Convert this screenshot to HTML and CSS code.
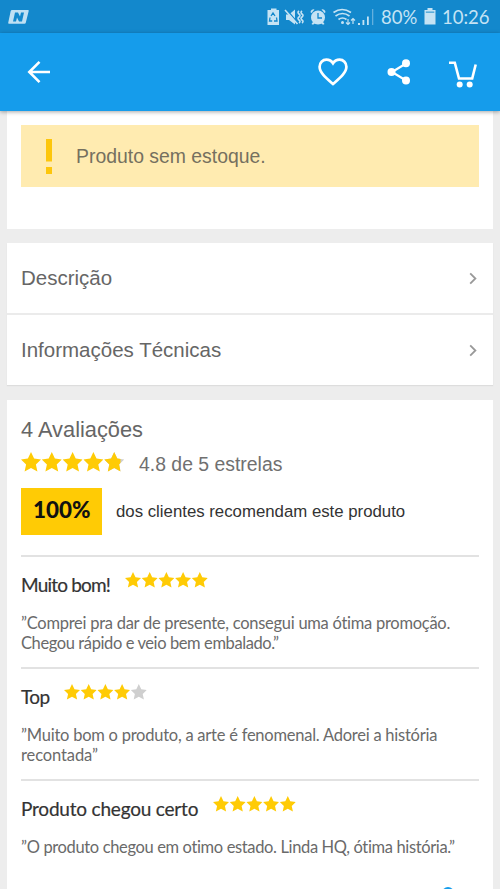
FILE: index.html
```html
<!DOCTYPE html>
<html lang="pt-BR">
<head>
<meta charset="utf-8">
<meta name="viewport" content="width=device-width">
<title>Produto</title>
<link rel="stylesheet" href="styles.css">
</head>
<body>
<svg class="defs" aria-hidden="true">
  <symbol id="star" viewBox="0 0 20 20"><path d="M10 0l3.100 6.600 6.900.8-5.100 5 1.500 7.100L10 15.900l-6.400 3.600 1.500-7.100L0 7.400l6.900-.8z"/></symbol>
</svg>
<div class="screen">
  <div class="status">
    <svg class="status-app" width="21" height="14" viewBox="0 0 21 14"><path d="M4 0h16q1 0 .7 1l-3 12q-.2.8-1.2.8H1q-1 0-.8-1L2.7 1Q3 0 4 0z" fill="#bfe0f3"/><path d="M5 11.500L7 2.500h3l2 4 1-4h3l-2 9h-3l-2-4-1 4z" fill="#1388cc"/></svg>
    <svg class="status-icons" width="112" height="20" viewBox="0 0 112 20">
      <g fill="#c5e3f4">
        <path d="M4 1.500h5.500V3H12v15H.5V3H4z"/>
        <path d="M19 7.500h3l6-5v15L22 13h-3z"/>
        <circle cx="51" cy="10.500" r="7"/>
        <path d="M43.500 5a3 3 0 0 1 4-2.500l-3.300 3.800zM58.500 5a3 3 0 0 0-4-2.500l3.300 3.800zM46 15l-1.500 2 1.500.8 2-1.500zM56 15l1.500 2-1.500.8-2-1.500z"/>
        <path d="M91 18v-2h2v2zM95.500 18v-5h1.800v5zM100 18V9.500h1.800V18z"/>
        <path d="M105 18V2h1.300v16z" opacity=".45"/>
      </g>
      <g fill="none" stroke="#1388cc" stroke-width="1.300">
        <path d="M4 9l2-3 2 3M9.500 10.500l.5 3.500H7M5.200 14H2.500L3 10.500"/>
        <path d="M19.500 2.500l11 13" stroke-width="1.300"/>
        <path d="M51 6v5h4"/>
      </g>
      <g fill="none" stroke="#c5e3f4" stroke-width="1.600">
        <path d="M18 3l12.500 14M32 4q-2 1.500 0 3t0 3 0 3 0 3M35 4q-2 1.500 0 3t0 3 0 3 0 3"/>
        <path d="M66.500 5.500q8.500-6 17.500 0M68.500 9q7-5 14 0M71.500 12.500q4-3 8 0" stroke-width="1.700"/>
        <path d="M81 12v5.500M79 15.500l2 2 2-2M86 17v-5.500M84 13.500l2-2 2 2" stroke-width="1.200"/>
      </g>
      <circle cx="75.500" cy="15.500" r="1.500" fill="#c5e3f4"/>
    </svg>
    <span class="battery">80%</span>
    <svg class="battery-icon" width="12" height="17" viewBox="0 0 12 17"><path d="M3.500 0h5v2H11.500v14.500H.5V2h3z" fill="#c5e3f4"/><path d="M1.800 4.200h8.500" stroke="#5badda" stroke-width="1.600"/></svg>
    <span class="clock">10:26</span>
  </div>
  <header class="appbar">
    <svg class="back" width="24" height="24" viewBox="0 0 24 24" fill="none" stroke="#fff" stroke-width="2.600"><path d="M23 12H2.500M12.500 1.800L2.300 12l10.200 10.200"/></svg>
    <svg class="heart" width="30" height="28" viewBox="0 0 30 28" fill="none" stroke="#fff" stroke-width="2.700"><path d="M15 26C8.500 20.300 1.600 14.800 1.600 8.700c0-4 3-7 6.800-7 2.700 0 5.100 1.300 6.600 3.600 1.500-2.300 3.900-3.600 6.600-3.600 3.800 0 6.800 3 6.800 7 0 6.100-6.900 11.600-13.400 17.300z"/></svg>
    <svg class="share" width="24" height="26" viewBox="0 0 24 26" fill="#fff"><path d="M19 4.500L5 13l14 8.500" fill="none" stroke="#fff" stroke-width="2.200"/><circle cx="19" cy="4.300" r="4"/><circle cx="4.500" cy="13" r="4"/><circle cx="19" cy="21.500" r="4"/></svg>
    <svg class="cart" width="28" height="27" viewBox="0 0 28 27" fill="none" stroke="#fff" stroke-width="2.600"><path d="M0 1.700h5.800L10 17.500h13.200L26.700 3.500"/><g fill="#fff" stroke="none"><circle cx="10.700" cy="23.500" r="3"/><circle cx="20.700" cy="23.500" r="3"/></g></svg>
  </header>
  <main>
    <section class="card stock">
      <div class="alert"><svg width="6" height="35" viewBox="0 0 6 35" fill="#fdc60c"><path d="M0 0h6v22.500H0zM0 28h6v7H0z"/></svg><span>Produto sem estoque.</span></div>
    </section>
    <section class="card links">
      <div class="row"><span>Descrição</span><svg width="8" height="13" viewBox="0 0 8 13"><path d="M1.200 1.300l5.200 5.200-5.200 5.200"/></svg></div>
      <div class="row"><span>Informações Técnicas</span><svg width="8" height="13" viewBox="0 0 8 13"><path d="M1.200 1.300l5.200 5.200-5.200 5.200"/></svg></div>
    </section>
    <section class="card reviews">
      <h2>4 Avaliações</h2>
      <div class="score">
        <svg class="stars-lg" width="104" height="20" viewBox="0 0 104 20"><g fill="#cfcfcf"><use href="#star" x="83.200" width="20" height="20"/></g><g fill="#ffcb05"><use href="#star" width="20" height="20"/><use href="#star" x="20.800" width="20" height="20"/><use href="#star" x="41.600" width="20" height="20"/><use href="#star" x="62.400" width="20" height="20"/><svg width="99.500" height="20"><use href="#star" x="83.200" width="20" height="20"/></svg></g></svg>
        <span>4.8 de 5 estrelas</span>
      </div>
      <div class="recommend"><b>100%</b><span class="rec-text">dos clientes recomendam este produto</span></div>
      <article>
        <div class="head"><h3 class="w1">Muito bom!</h3><svg class="stars" width="83" height="16" viewBox="0 0 83 16"><use href="#star" width="16" height="16"/><use href="#star" x="16.700" width="16" height="16"/><use href="#star" x="33.400" width="16" height="16"/><use href="#star" x="50.100" width="16" height="16"/><use href="#star" x="66.800" width="16" height="16"/></svg></div>
        <p><span class="l1">”Comprei pra dar de presente, consegui uma ótima promoção.</span><br><span class="l2">Chegou rápido e veio bem embalado.”</span></p>
      </article>
      <article>
        <div class="head"><h3 class="w2">Top</h3><svg class="stars" width="83" height="16" viewBox="0 0 83 16"><use href="#star" width="16" height="16"/><use href="#star" x="16.700" width="16" height="16"/><use href="#star" x="33.400" width="16" height="16"/><use href="#star" x="50.100" width="16" height="16"/><use class="off" href="#star" x="66.800" width="16" height="16"/></svg></div>
        <p><span class="l3">”Muito bom o produto, a arte é fenomenal. Adorei a história</span><br><span class="l4">recontada”</span></p>
      </article>
      <article>
        <div class="head"><h3 class="w3">Produto chegou certo</h3><svg class="stars" width="83" height="16" viewBox="0 0 83 16"><use href="#star" width="16" height="16"/><use href="#star" x="16.700" width="16" height="16"/><use href="#star" x="33.400" width="16" height="16"/><use href="#star" x="50.100" width="16" height="16"/><use href="#star" x="66.800" width="16" height="16"/></svg></div>
        <p><span class="l5">”O produto chegou em otimo estado. Linda HQ, ótima história.”</span></p>
      </article>
      <div class="more"></div>
    </section>
  </main>
</div>
</body>
</html>
```
FILE: styles.css
```css
* { box-sizing: border-box; margin: 0; padding: 0; }
body { background: #ededed; font-family: "Liberation Sans", Arial, sans-serif; color: #666; font-variant-ligatures: none; }
svg { display: block; flex: none; }
.defs { position: absolute; width: 0; height: 0; }
.screen { width: 500px; height: 889px; overflow: hidden; display: flex; flex-direction: column; }
.status { flex: none; height: 33px; background: #1388cc; display: flex; color: #c5e3f4; font: 18.5px/34px Lato, sans-serif; font-variant-ligatures: none; white-space: nowrap; }
.status-app { margin: 10px 0 0 8px; }
.status-icons { margin: 7px 0 0 238px; }
.battery { width: 38px; margin-left: 2px; }
.battery-icon { margin: 8px 0 0 5px; }
.clock { margin-left: 6px; }
.appbar { flex: none; height: 78px; background: #159ceb; display: flex; position: relative; box-shadow: 0 1px 4px rgba(0,0,0,.35); }
.back { margin: 27px 0 0 27px; }
.heart { margin: 25px 0 0 267px; }
.share { margin: 26px 0 0 39px; }
.cart { margin: 28px 0 0 38px; }
main { padding: 0 7px; flex: none; }
.card { background: #fff; padding: 0 14px; }
.stock { height: 118px; padding-top: 14px; margin-bottom: 14px; }
.alert { height: 62px; background: #ffebb0; display: flex; padding-left: 25px; color: #75705f; font-size: 19.4px; line-height: 63px; }
.alert svg { margin: 14px 24px 0 0; }
.links { height: 142px; margin-bottom: 15px; box-shadow: 0 1px 1px #ddd; padding: 0; }
.row { height: 70px; padding: 0 16px 0 14px; display: flex; align-items: center; justify-content: space-between; font-size: 20.5px; }
.row + .row { height: 72px; border-top: 2px solid #ebebeb; }
.row svg { fill: none; stroke: #999; stroke-width: 1.8; }
.reviews { height: 510px; padding-top: 15px; }
h2 { font-weight: 400; font-size: 21.8px; line-height: 29px; }
.score { display: flex; height: 44px; }
.stars-lg { margin-top: 8px; }
.score span { font-size: 19.4px; line-height: 41px; margin-left: 14px; color: #707070; }
.recommend { display: flex; height: 47px; }
.recommend b { width: 81px; background: #ffcb05; color: #111; font: 900 22.4px/43px Lato, sans-serif; padding-left: 12px; }
.rec-text { margin-left: 14px; font-size: 16.8px; line-height: 48px; color: #333; white-space: nowrap; }
article { border-top: 2px solid #e2e2e2; height: 112px; }
.recommend + article { margin-top: 20px; }
.head { display: flex; height: 54px; gap: 15px; }
h3 { font: 400 19px/56px Lato, sans-serif; font-variant-ligatures: none; color: #333; white-space: nowrap; -webkit-text-stroke: .2px #333; }
.w1 { width: 89px; letter-spacing: -.8px; }
.w2 { width: 28px; letter-spacing: -.6px; }
.w3 { width: 177px; letter-spacing: -.2px; }
.stars { margin-top: 15px; fill: #ffcb05; }
.stars .off { fill: #cfcfcf; }
p { font: 16.5px/20px Lato, sans-serif; font-variant-ligatures: none; color: #6a6a6a; padding-top: 2px; white-space: nowrap; }
.l1 { letter-spacing: -.27px; }
.l2 { letter-spacing: -.4px; }
.l3 { letter-spacing: -.24px; }
.l4 { letter-spacing: -.1px; }
.l5 { letter-spacing: -.36px; }
.more { width: 12px; height: 12px; border-radius: 50%; background: #159ceb; margin: -4px 0 0 421px; }
```
